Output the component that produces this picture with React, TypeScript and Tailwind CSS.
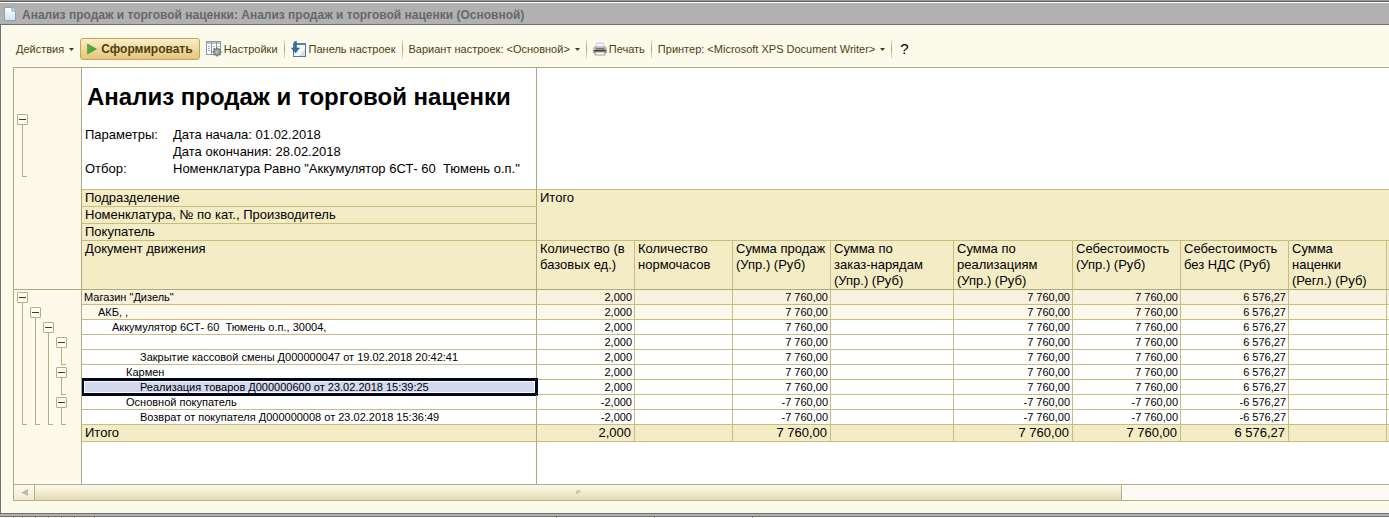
import type { ReactNode } from "react";

type Row = {
  label: string;
  indent: string;
  qty: string;
  sum: string;
  cost: string;
  fill: string;
  selected?: boolean;
};

const rows: Row[] = [
  { label: 'Магазин "Дизель"', indent: "pl-0.5", qty: "2,000", sum: "7 760,00", cost: "6 576,27", fill: "bg-[#f8f1dc]" },
  { label: "АКБ, ,", indent: "pl-4", qty: "2,000", sum: "7 760,00", cost: "6 576,27", fill: "bg-[#fcf9ec]" },
  { label: "Аккумулятор 6СТ- 60  Тюмень о.п., 30004,", indent: "pl-[30px]", qty: "2,000", sum: "7 760,00", cost: "6 576,27", fill: "bg-white" },
  { label: "", indent: "pl-11", qty: "2,000", sum: "7 760,00", cost: "6 576,27", fill: "bg-white" },
  { label: "Закрытие кассовой смены Д000000047 от 19.02.2018 20:42:41", indent: "pl-[58px]", qty: "2,000", sum: "7 760,00", cost: "6 576,27", fill: "bg-white" },
  { label: "Кармен", indent: "pl-11", qty: "2,000", sum: "7 760,00", cost: "6 576,27", fill: "bg-white" },
  { label: "Реализация товаров Д000000600 от 23.02.2018 15:39:25", indent: "pl-[58px]", qty: "2,000", sum: "7 760,00", cost: "6 576,27", fill: "bg-white", selected: true },
  { label: "Основной покупатель", indent: "pl-11", qty: "-2,000", sum: "-7 760,00", cost: "-6 576,27", fill: "bg-white" },
  { label: "Возврат от покупателя Д000000008 от 23.02.2018 15:36:49", indent: "pl-[58px]", qty: "-2,000", sum: "-7 760,00", cost: "-6 576,27", fill: "bg-white" },
];

const columns = [
  "Количество (в базовых ед.)",
  "Количество нормочасов",
  "Сумма продаж (Упр.) (Руб)",
  "Сумма по\nзаказ-нарядам (Упр.) (Руб)",
  "Сумма по реализациям (Упр.) (Руб)",
  "Себестоимость (Упр.) (Руб)",
  "Себестоимость без НДС (Руб)",
  "Сумма наценки (Регл.) (Руб)",
  "",
];

const valuesOf = (qty: string, sum: string, cost: string) => [qty, "", sum, "", sum, sum, cost, "", ""];

function PageIcon() {
  return (
    <svg className="size-4 shrink-0" viewBox="0 0 16 16" aria-hidden="true">
      <defs>
        <linearGradient id="page" x1="0" y1="0" x2="0" y2="1">
          <stop offset="0" stopColor="#ffffff" />
          <stop offset="1" stopColor="#cfe2ee" />
        </linearGradient>
      </defs>
      <path d="M2.5 1.5H10L13.5 5V14.5H2.5Z" fill="url(#page)" stroke="#8ba3b4" />
      <path d="M10 1.5V5H13.5" fill="#e8f4fa" stroke="#7c9bb0" />
    </svg>
  );
}

function PlayIcon() {
  return (
    <svg className="h-3 w-2.5" viewBox="0 0 10 12" aria-hidden="true">
      <defs>
        <linearGradient id="play" x1="0" y1="0" x2="1" y2="1">
          <stop offset="0" stopColor="#7b9b58" />
          <stop offset="0.5" stopColor="#43b02a" />
          <stop offset="1" stopColor="#2f8f1c" />
        </linearGradient>
      </defs>
      <path d="M0.5 1L9.5 6L0.5 11Z" fill="url(#play)" stroke="#6f9a3c" strokeWidth="0.8" />
    </svg>
  );
}

function SettingsIcon() {
  return (
    <svg className="size-4" viewBox="0 0 16 16" aria-hidden="true">
      <rect x="0.5" y="0.5" width="14" height="13" fill="#fff" stroke="#8a97a6" />
      <rect x="1" y="1" width="13" height="2" fill="#b9c6d4" />
      <path d="M5.5 1V13M10.5 1V13" stroke="#8a97a6" />
      <path d="M2 5.500H4M2 7.500H4M2 9.500H4M7 5.500H9M7 7.500H9M12 5.500H13.500" stroke="#9fb0c2" />
      <circle cx="11" cy="11" r="3.4" fill="#a9adb3" stroke="#6c7178" />
      <path d="M11 6.500V8M11 14V15.500M6.500 11H8M14 11H15.500M7.800 7.800L8.900 8.900M13.100 13.100L14.200 14.200M14.200 7.800L13.100 8.900M8.900 13.100L7.800 14.200" stroke="#6c7178" strokeWidth="1.4" />
      <circle cx="11" cy="11" r="1.300" fill="#f2f4f6" stroke="#6c7178" strokeWidth="0.6" />
    </svg>
  );
}

function PanelIcon() {
  return (
    <svg className="size-4" viewBox="0 0 16 16" aria-hidden="true">
      <rect x="2.500" y="2.500" width="12" height="13" fill="#f6fafd" stroke="#54799b" />
      <rect x="2" y="2" width="13" height="2" fill="#4c86b4" />
      <path d="M8 15H14V8Z" fill="#cfdfeb" />
      <path d="M3.500 0.500H5.500V7H8.500L4.500 12L0.500 7H3.500Z" fill="#2b6ea3" stroke="#1f5580" strokeWidth="0.5" />
    </svg>
  );
}

function PrinterIcon() {
  return (
    <svg className="size-3.5" viewBox="0 0 14 14" aria-hidden="true">
      <path d="M3.500 1H10.500L11.500 6H2.500Z" fill="#eef4fb" stroke="#b3b9c2" strokeWidth="0.7" />
      <path d="M1.500 5H12.500L13.600 8V11H0.400V8Z" fill="#cfcbc6" stroke="#96918b" strokeWidth="0.7" />
      <rect x="2.500" y="6" width="9" height="1.500" fill="#777370" />
      <rect x="1" y="8" width="12" height="1.500" fill="#35312f" />
      <rect x="8.500" y="7.200" width="1.600" height="1.200" fill="#e0452e" />
      <rect x="10.500" y="7.200" width="1.400" height="1.200" fill="#57b544" />
      <path d="M2.500 10H11.500L12 13H2Z" fill="#ffffff" stroke="#8b8680" strokeWidth="0.8" />
    </svg>
  );
}

function Caret() {
  return (
    <svg className="ml-[3px] h-[3px] w-[5px]" viewBox="0 0 5 3" aria-hidden="true">
      <path d="M0 0H5L2.500 3Z" fill="#4a3c10" />
    </svg>
  );
}

function Separator() {
  return <span className="h-5 w-px shrink-0 bg-linear-to-b from-[#efe9cc] via-[#a8a07a] to-[#efe9cc]" />;
}

function ToolButton({ children }: { children: ReactNode }) {
  return (
    <button type="button" className="flex shrink-0 items-center gap-0.5 whitespace-nowrap">
      {children}
    </button>
  );
}

function Branch({ stem }: { stem: string }) {
  return (
    <div className="flex w-[11px] flex-col">
      <button
        type="button"
        aria-label="Свернуть группу"
        className="flex size-[11px] items-center justify-center rounded-[1px] border border-[#b5ae88] bg-[#fefdf6]"
      >
        <span className="h-px w-[7px] bg-[#4a3c10]" />
      </button>
      <span className={`ml-[5px] w-[5px] border-b border-l border-[#b5ae88] ${stem}`} />
    </div>
  );
}

function Gutter() {
  return (
    <div className="w-[68px] shrink-0 border-r border-[#aea883] bg-[#fdfaeb]">
      <div className="h-[222px] border-b border-[#aea883] pt-[46px] pl-[3px]">
        <Branch stem="h-[52px]" />
      </div>
      <div className="flex items-start gap-0.5 pt-0.5 pl-[3px]">
        <Branch stem="h-[122px]" />
        <div className="pt-[15px]">
          <Branch stem="h-[107px]" />
        </div>
        <div className="pt-[30px]">
          <Branch stem="h-[92px]" />
        </div>
        <div className="flex flex-col gap-0.5 pt-[45px]">
          <Branch stem="h-[17px]" />
          <Branch stem="h-[17px]" />
          <Branch stem="h-[17px]" />
        </div>
      </div>
    </div>
  );
}

function ReportHeading() {
  return (
    <div className="flex h-[121px]">
      <div className="w-[455px] shrink-0 border-r border-[#aea883] pt-[13px] pl-[3px] text-[13px] leading-[17px]">
        <h1 className="pl-0.5 text-[24px] leading-8 font-bold whitespace-nowrap">Анализ продаж и торговой наценки</h1>
        <dl className="grid grid-cols-[88px_1fr] pt-[13px] whitespace-pre">
          <dt>Параметры:</dt>
          <dd>Дата начала: 01.02.2018</dd>
          <dd className="col-start-2">Дата окончания: 28.02.2018</dd>
          <dt>Отбор:</dt>
          <dd>{'Номенклатура Равно "Аккумулятор 6СТ- 60  Тюмень о.п."'}</dd>
        </dl>
      </div>
    </div>
  );
}

function ReportTable() {
  const head = "border-r border-b border-[#c9bc80] px-[3px] text-left align-top font-normal";
  return (
    <table className="w-full table-fixed border-separate border-spacing-0 border-t border-[#c9bc80] text-[13px] leading-4">
      <colgroup>
        <col className="w-[455px]" />
        <col className="w-[98px]" />
        <col className="w-[98px]" />
        <col className="w-[98px]" />
        <col className="w-[123px]" />
        <col className="w-[119px]" />
        <col className="w-[108px]" />
        <col className="w-[108px]" />
        <col className="w-[98px]" />
        <col />
      </colgroup>
      <thead className="bg-[#f4ecc5]">
        <tr className="h-[17px]">
          <th className={`${head} border-r-[#aea883]`}>Подразделение</th>
          <th className="border-b border-[#c9bc80] px-[3px] text-left align-top font-normal" colSpan={9} rowSpan={3}>
            Итого
          </th>
        </tr>
        <tr className="h-[17px]">
          <th className={`${head} border-r-[#aea883]`}>Номенклатура, № по кат., Производитель</th>
        </tr>
        <tr className="h-[17px]">
          <th className={`${head} border-r-[#aea883]`}>Покупатель</th>
        </tr>
        <tr className="h-[49px]">
          <th className={`${head} border-r-[#aea883] border-b-[#aea883]`}>Документ движения</th>
          {columns.map((name, i) => (
            <th
              key={i}
              className={name ? `${head} border-b-[#aea883] whitespace-pre-line` : "border-b border-[#aea883] p-0"}
            >
              {name}
            </th>
          ))}
        </tr>
      </thead>
      <tbody className="text-[11px] leading-[14px] whitespace-pre">
        {rows.map((row, i) => (
          <tr key={i} className={`h-[15px] ${row.fill}`}>
            <td className={`relative border-r border-b border-[#c9bc80] border-r-[#aea883] py-0 pr-0 ${row.indent}`}>
              {row.selected && (
                <span className="absolute -top-0.5 -right-0.5 -bottom-0.5 left-0 border-y-[3px] border-r-[3px] border-l-2 border-[#05071c] bg-[#d3d8ef] shadow-[inset_0_0_0_1px_#ffffff]" />
              )}
              <span className="relative">{row.label}</span>
            </td>
            {valuesOf(row.qty, row.sum, row.cost).map((value, c) => (
              <td
                key={c}
                className={c < 8 ? "border-r border-b border-[#c9bc80] py-0 pr-0.5 pl-0 text-right" : "border-b border-[#c9bc80] p-0"}
              >
                {value}
              </td>
            ))}
          </tr>
        ))}
      </tbody>
      <tfoot className="bg-[#f4ecc5]">
        <tr className="h-[17px]">
          <td className="border-r border-b border-[#c9bc80] border-r-[#aea883] px-[3px] py-0">Итого</td>
          {valuesOf("2,000", "7 760,00", "6 576,27").map((value, c) => (
            <td
              key={c}
              className={c < 8 ? "border-r border-b border-[#c9bc80] px-[3px] py-0 text-right" : "border-b border-[#c9bc80] p-0"}
            >
              {value}
            </td>
          ))}
        </tr>
      </tfoot>
    </table>
  );
}

function ScrollBar() {
  return (
    <div className="flex h-[17px] border-y border-[#b5ae88] bg-[#fbfaf4]">
      <button
        type="button"
        aria-label="Прокрутить влево"
        className="flex w-[21px] shrink-0 items-center justify-center border-r border-[#b5ae88] bg-linear-to-b from-[#fcfaf0] to-[#f0ebcf]"
      >
        <svg className="h-[7px] w-[7px]" viewBox="0 0 7 7" aria-hidden="true">
          <path d="M7 0V7L0 3.500Z" fill="#bfbba4" />
        </svg>
      </button>
      <div className="flex grow">
        <div className="flex w-[80.3%] items-center justify-center border-r border-[#b5ae88] bg-linear-to-b from-[#fbf8ea] via-[#f3edd0] to-[#e4dab0]">
          <span className="size-[5px] rounded-full bg-linear-to-br from-[#b5ae88] to-[#fbf8ea]" />
        </div>
      </div>
    </div>
  );
}

function NextWindowEdge() {
  return (
    <div className="flex h-px divide-x divide-[#b5ae88] bg-[#fcfaea]">
      <span className="w-3.5 shrink-0" />
      <span className="w-[9px] shrink-0" />
      <span className="w-[13px] shrink-0" />
      <span className="w-[13px] shrink-0" />
      <span className="w-[13px] shrink-0" />
      <span className="w-[13px] shrink-0" />
      <span className="w-5 shrink-0" />
      <span className="w-[462px] shrink-0 bg-white" />
      <span className="w-[98px] shrink-0 bg-white" />
      <span className="w-[98px] shrink-0 bg-white" />
      <span className="grow bg-white" />
    </div>
  );
}

export default function App() {
  return (
    <div className="overflow-hidden bg-[#b1b1b1] font-['Liberation_Sans',Arial,sans-serif] text-black">
      <div className="h-[3px] border-t border-b border-t-[#999999] border-b-white bg-[#5f5f5f]" />
      <header className="flex h-[22px] items-center gap-1 border-b border-[#707070] pl-0.5 text-[#686868]">
        <PageIcon />
        <h2 className="pt-0.5 text-[12px] font-bold whitespace-nowrap">
          Анализ продаж и торговой наценки: Анализ продаж и торговой наценки (Основной)
        </h2>
      </header>
      <main className="border-b border-l border-[#707070] bg-[#fcfaea] pb-3 pl-3">
        <div className="flex h-[42px] items-center gap-[6px] pt-[6px] pl-[3px] text-[11px] text-[#4f3f10]">
          <ToolButton>
            Действия
            <Caret />
          </ToolButton>
          <button
            type="button"
            className="flex h-[22px] shrink-0 items-center gap-1 rounded-[3px] border border-[#c9a44c] bg-linear-to-b from-[#fbeecb] via-[#f0d9a0] to-[#e3c583] px-1.5 text-[12px] font-bold"
          >
            <PlayIcon />
            Сформировать
          </button>
          <ToolButton>
            <SettingsIcon />
            Настройки
          </ToolButton>
          <Separator />
          <ToolButton>
            <PanelIcon />
            Панель настроек
          </ToolButton>
          <Separator />
          <ToolButton>
            {"Вариант настроек: <Основной>"}
            <Caret />
          </ToolButton>
          <Separator />
          <ToolButton>
            <PrinterIcon />
            Печать
          </ToolButton>
          <Separator />
          <ToolButton>
            {"Принтер: <Microsoft XPS Document Writer>"}
            <Caret />
          </ToolButton>
          <Separator />
          <button type="button" aria-label="Справка" className="px-0.5 text-[15px] text-black">
            ?
          </button>
        </div>
        <div className="border-t border-l border-[#aea883]">
          <div className="flex">
            <Gutter />
            <div className="min-w-0 grow bg-white">
              <ReportHeading />
              <ReportTable />
              <div className="h-[42px] w-[455px] border-r border-[#aea883]" />
            </div>
          </div>
          <ScrollBar />
        </div>
      </main>
      <div className="h-[3px] border-b border-[#707070]" />
      <NextWindowEdge />
    </div>
  );
}
